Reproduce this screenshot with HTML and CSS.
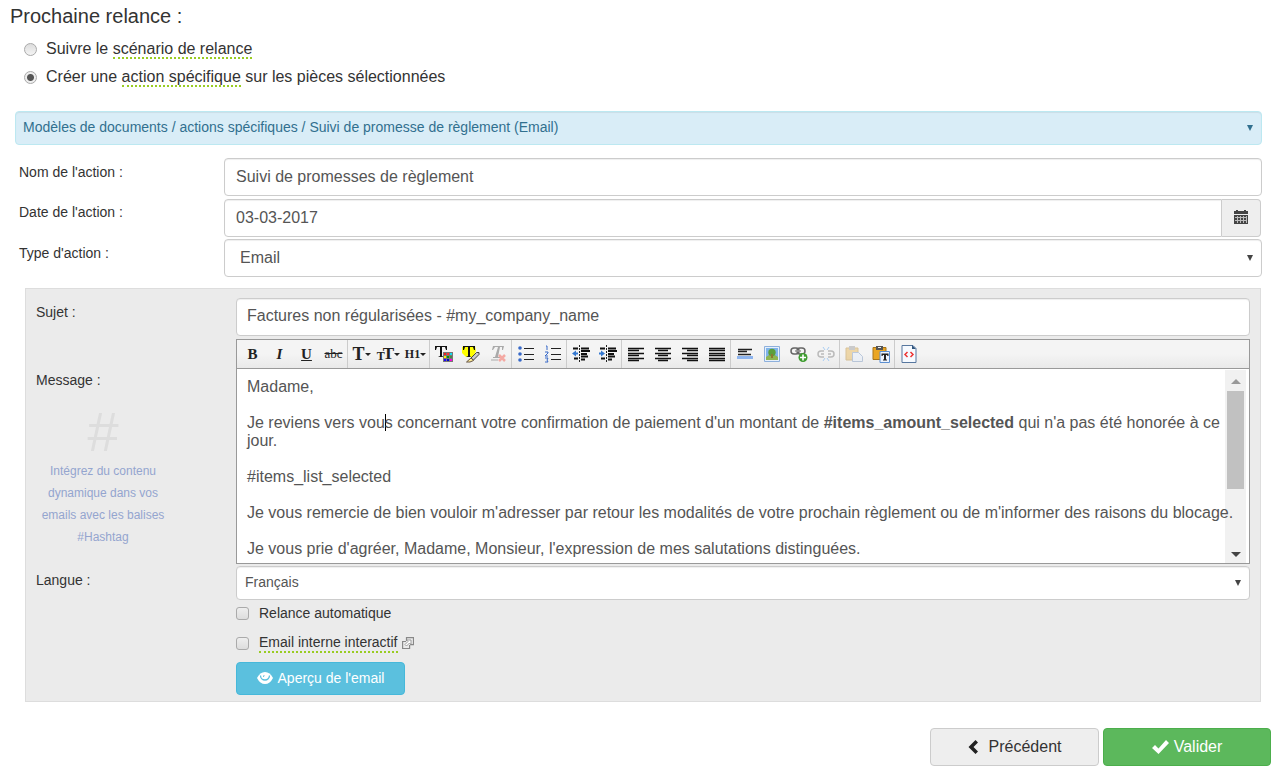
FILE: index.html
```html
<!DOCTYPE html>
<html lang="fr">
<head>
<meta charset="utf-8">
<title>Prochaine relance</title>
<link rel="stylesheet" href="styles.css">
</head>
<body>
<form class="page">
  <h1 class="title">Prochaine relance :</h1>
  <div class="choices">
    <label class="choice"><input class="radio" type="radio" name="mode"><span>Suivre le <span class="hint">scénario de relance</span></span></label>
    <label class="choice"><input class="radio" type="radio" name="mode" checked><span>Créer une <span class="hint">action spécifique</span> sur les pièces sélectionnées</span></label>
  </div>

  <div class="select-wrap template">
    <select class="control compact info" aria-label="Modèle"><option>Modèles de documents / actions spécifiques / Suivi de promesse de règlement (Email)</option></select>
  </div>

  <div class="fields">
    <div class="row">
      <label class="label" for="nom">Nom de l'action :</label>
      <input class="control" id="nom" type="text" value="Suivi de promesses de règlement">
    </div>
    <div class="row">
      <label class="label" for="date">Date de l'action :</label>
      <div class="input-group">
        <input class="control" id="date" type="text" value="03-03-2017">
        <button class="addon" type="button" aria-label="Calendrier">
          <svg width="14" height="14" viewBox="0 0 14 14"><path fill="#444" d="M0 1h2V0h2v1h6V0h2v1h2v3H0zM0 5h14v9H0z"/><path stroke="#eee" stroke-width="1" d="M1 7.500h12M1 10.500h12M3.500 6v7M6.500 6v7M9.500 6v7M12.500 6v7" opacity=".7"/></svg>
        </button>
      </div>
    </div>
    <div class="row">
      <label class="label" for="type">Type d'action :</label>
      <div class="select-wrap"><select class="control" id="type"><option>Email</option></select></div>
    </div>
  </div>

  <section class="panel">
    <div class="row">
      <label class="label" for="sujet">Sujet :</label>
      <input class="control" id="sujet" type="text" value="Factures non régularisées - #my_company_name">
    </div>
    <div class="row message">
      <div class="side">
        <span class="label" id="msg">Message :</span>
        <div class="tip"><span class="hash">#</span><p class="tip-text">Intégrez du contenu dynamique dans vos emails avec les balises #Hashtag</p></div>
      </div>
      <div class="editor">
        <div class="toolbar">
          <div class="group">
            <button class="tool serif" type="button"><b>B</b></button>
            <button class="tool serif" type="button"><i>I</i></button>
            <button class="tool serif" type="button"><u>U</u></button>
            <button class="tool serif strike" type="button"><s>abc</s></button>
          </div>
          <div class="group">
            <button class="tool serif big" type="button">T<span class="drop"></span></button>
            <button class="tool serif big" type="button"><small class="mini">T</small>T<span class="drop"></span></button>
            <button class="tool serif small" type="button">H1<span class="drop"></span></button>
          </div>
          <div class="group">
            <button class="tool" type="button" aria-label="Couleur"><svg class="icon" viewBox="0 0 18 18"><path d="M0 1h12v4h-1L10 2H7v9l2 1H3l2-1V2H2L1 5H0z" fill="#111"/><path d="M8 7h10v10H8z" fill="#777"/><path d="M9 8h2v2H9z" fill="#e22"/><path d="M12 8h2v2h-2z" fill="#f33"/><path d="M15 8h2v2h-2z" fill="#1de"/><path d="M9 11h2v2H9z" fill="#fe0"/><path d="M12 11h2v2h-2z" fill="#090"/><path d="M15 11h2v2h-2z" fill="#484"/><path d="M9 14h2v2H9z" fill="#20f"/><path d="M12 14h2v2h-2z" fill="#00c"/><path d="M15 14h2v2h-2z" fill="#f0d"/></svg></button>
            <button class="tool" type="button" aria-label="Surligner"><svg class="icon" viewBox="0 0 18 18"><path d="M0 2l2-1h11l1 5-3 6H4L0 8z" fill="#ff0"/><path d="M1 1h12v4h-1l-1-3H8v9l1 1H4l2-1V2H3L2 5H1z" fill="#111"/><path d="M14.500 7.500h2.500v2l-5.500 5.500-2.500-2z" fill="#ccc" stroke="#444"/><path d="M9 13l2.500 2.500L8 17H4.500z" fill="#fe9" stroke="#654"/></svg></button>
            <button class="tool" type="button" aria-label="Effacer le format"><svg class="icon" viewBox="0 0 18 18"><path d="M4 1h11l-1 4h-1V2h-2L9 12h2v1H4v-1h2L9 2H6L4 5H3z" fill="#aaa"/><path d="M2 15h7" stroke="#aaa"/><path d="M10 10l6 6m0-6l-6 6" stroke="#f4a9a3" stroke-width="2.500"/></svg></button>
          </div>
          <div class="group">
            <button class="tool" type="button" aria-label="Liste"><svg class="icon" viewBox="0 0 18 18"><g fill="#3668c8"><circle cx="3" cy="3" r="1.800"/><circle cx="3" cy="9" r="1.800"/><circle cx="3" cy="15" r="1.800"/></g><path d="M7 3.500h10M7 9.500h10M7 14.500h10" stroke="#222"/></svg></button>
            <button class="tool" type="button" aria-label="Liste numérotée"><svg class="icon" viewBox="0 0 18 18"><path d="M2 1h1v4M1 7h3v1L1 11h3M1 13h3l-1 2 1 2H1" fill="none" stroke="#3668c8"/><path d="M7 3.500h10M7 9.500h10M7 14.500h10" stroke="#222"/></svg></button>
          </div>
          <div class="group">
            <button class="tool" type="button" aria-label="Diminuer le retrait"><svg class="icon" viewBox="0 0 18 18"><path d="M1 3.500h5M9 3.500h8M9 6h9M9 9h6M9 11.500h7M2 13.500h4M9 14.500h4" stroke="#111" stroke-width="1.800"/><path d="M7.500 0v18" stroke="#222" stroke-dasharray="2 1"/><path d="M0 8.500l4-3v2h2v2H4v2z" fill="#3478d0"/></svg></button>
            <button class="tool" type="button" aria-label="Augmenter le retrait"><svg class="icon" viewBox="0 0 18 18"><path d="M1 3.500h5M9 3.500h8M9 6h9M9 9h6M9 11.500h7M2 13.500h4M9 14.500h4" stroke="#111" stroke-width="1.800"/><path d="M7.500 0v18" stroke="#222" stroke-dasharray="2 1"/><path d="M6 8.500l-4-3v2H0v2h2v2z" fill="#3478d0"/></svg></button>
          </div>
          <div class="group">
            <button class="tool" type="button" aria-label="Gauche"><svg class="icon" viewBox="0 0 18 18"><path d="M1 3.500h16M1 5.500h11M1 8.500h16M1 10.500h11M1 13.500h16M1 15.500h11" stroke="#111" stroke-width="1.300"/></svg></button>
            <button class="tool" type="button" aria-label="Centrer"><svg class="icon" viewBox="0 0 18 18"><path d="M1 3.500h16M4 5.500h10M1 8.500h16M4 10.500h10M1 13.500h16M4 15.500h10" stroke="#111" stroke-width="1.300"/></svg></button>
            <button class="tool" type="button" aria-label="Droite"><svg class="icon" viewBox="0 0 18 18"><path d="M1 3.500h16M6 5.500h11M1 8.500h16M6 10.500h11M1 13.500h16M6 15.500h11" stroke="#111" stroke-width="1.300"/></svg></button>
            <button class="tool" type="button" aria-label="Justifier"><svg class="icon" viewBox="0 0 18 18"><path d="M1 3.500h16M1 5.500h16M1 8.500h16M1 10.500h16M1 13.500h16M1 15.500h16" stroke="#111" stroke-width="1.300"/></svg></button>
          </div>
          <div class="group">
            <button class="tool" type="button" aria-label="Ligne"><svg class="icon" viewBox="0 0 18 18"><path d="M2 4.500h14M2 6.500h9M2 9.500h13" stroke="#222" stroke-width="1.300"/><path d="M1 11h16v3H1z" fill="#8db4ee"/></svg></button>
            <button class="tool" type="button" aria-label="Image"><svg class="icon" viewBox="0 0 18 18"><path d="M1.500 1.500h15v15h-15z" fill="#e6f0fb" stroke="#8eb0dc"/><path d="M3 3h12v12H3z" fill="#80b4ea"/><path d="M3 12l3-2 3 1 3-1 3 2v3H3z" fill="#8fb552"/><circle cx="9" cy="7.500" r="3.700" fill="#5b9f3c"/><path d="M8 9h2v4H8z" fill="#8a7a30"/></svg></button>
            <button class="tool" type="button" aria-label="Lien"><svg class="icon" viewBox="0 0 18 18"><g fill="none" stroke="#666" stroke-width="1.500"><rect x="1" y="3" width="8" height="6" rx="3"/><rect x="7" y="3" width="8" height="6" rx="3"/></g><path d="M5 6h6" stroke="#999" stroke-width="1.500"/><circle cx="13" cy="12.500" r="4.500" fill="#3e9c2f"/><path d="M10 12.500h6M13 9.500v6" stroke="#fff" stroke-width="1.600"/></svg></button>
            <button class="tool" type="button" aria-label="Supprimer le lien"><svg class="icon" viewBox="0 0 18 18"><g fill="none" stroke="#bbb" stroke-width="1.500"><path d="M7 6H4a3 3 0 0 0 0 6h3M11 6h3a3 3 0 0 1 0 6h-3M4 9h3M11 9h3"/></g><path d="M6 2l2 3M12 2l-2 3M6 16l2-3M12 16l-2-3" stroke="#a9cdf2"/></svg></button>
          </div>
          <div class="group">
            <button class="tool" type="button" aria-label="Coller"><svg class="icon faded" viewBox="0 0 18 18"><path d="M1 3h12v12H1z" fill="#e5b34e" stroke="#b98a2e"/><path d="M4 1h6v4H4z" fill="#999"/><path d="M7.500 7.500h6l4 4v5h-10z" fill="#e4edfa" stroke="#7895bd"/></svg></button>
            <button class="tool" type="button" aria-label="Coller le texte"><svg class="icon" viewBox="0 0 18 18"><path d="M1 2.500h13v12H1z" fill="#eaa522" stroke="#a87518"/><path d="M4 1h7v4H4z" fill="#555"/><path d="M6 2h3v1H6z" fill="#eee"/><path d="M8 6.500h9.500v11H8z" fill="#edf4ff" stroke="#5c8fd0"/><path d="M9.500 8.500h7v2.500h-1l-.5-1h-1v4.500h1v1h-4v-1h1V10h-1l-.5 1h-1z" fill="#222"/></svg></button>
          </div>
          <div class="group">
            <button class="tool" type="button" aria-label="Source"><svg class="icon" viewBox="0 0 18 18"><path d="M2 .5h11l3 3v14H2z" fill="#f6faff" stroke="#57779f"/><path d="M12 0l4 4h-4z" fill="#345880"/><path d="M7.500 7L5 9.500 7.500 12M10.500 7l2.500 2.500-2.500 2.500" fill="none" stroke="#e33" stroke-width="1.500"/></svg></button>
          </div>
        </div>
        <div class="edit-area">
          <div class="text" contenteditable="true" role="textbox" aria-labelledby="msg">
            <p>Madame,</p>
            <p>Je reviens vers vou<span class="caret"></span>s concernant votre confirmation de paiement d'un montant de <b>#items_amount_selected</b> qui n'a pas été honorée à ce jour.</p>
            <p>#items_list_selected</p>
            <p class="one-line">Je vous remercie de bien vouloir m'adresser par retour les modalités de votre prochain règlement ou de m'informer des raisons du blocage.</p>
            <p>Je vous prie d'agréer, Madame, Monsieur, l'expression de mes salutations distinguées.</p>
          </div>
          <div class="scroll"><span class="arrow up"></span><span class="thumb"></span><span class="arrow down"></span></div>
        </div>
      </div>
    </div>
    <div class="row">
      <label class="label" for="langue">Langue :</label>
      <div class="stack">
        <div class="select-wrap"><select class="control compact" id="langue"><option>Français</option></select></div>
        <label class="check"><input class="box" type="checkbox"><span>Relance automatique</span></label>
        <label class="check"><input class="box" type="checkbox"><span class="hint">Email interne interactif</span>
          <svg class="ext" width="12" height="12" viewBox="0 0 12 12"><path d="M4 4.500H.6v7h7V8M4.500 4V.6h7v7H8" fill="none" stroke="#888" stroke-width="1.200"/><path d="M3 7.500l3-3-1.500-1.500H9v4.500L7.500 6l-3 3z" fill="#fff" stroke="#888" stroke-width=".8"/></svg></label>
        <button class="btn preview" type="button"><svg width="16" height="12" viewBox="0 0 16 12"><path d="M0 6q3-6 8-6t8 6q-3 6-8 6T0 6z" fill="#fff"/><path d="M3.500 3.500a4.500 4.500 0 0 0 9 0" fill="none" stroke="#5bc0de" stroke-width="1.300"/><path d="M7.500 3q-1 .5-1 2" fill="none" stroke="#5bc0de"/></svg>Aperçu de l'email</button>
      </div>
    </div>
  </section>

  <div class="footer">
    <button class="btn large" type="button"><svg width="11" height="14" viewBox="0 0 11 14"><path d="M10 2.500L7.500 0 .5 7l7 7 2.500-2.500L5.500 7z" fill="#222"/></svg>Précédent</button>
    <button class="btn large primary" type="submit"><svg width="17" height="14" viewBox="0 0 17 14"><path d="M0 8l3-3 3.500 3.500L14 0l3 3L6.500 14z" fill="#fff"/></svg>Valider</button>
  </div>
</form>
</body>
</html>
```
FILE: styles.css
```css
* { box-sizing: border-box; }
body { margin: 0; background: #fff; color: #333; font: 14px/20px "Liberation Sans", Arial, sans-serif; }
button, input, select { font: inherit; color: inherit; margin: 0; }
.page { padding: 4px 9px 8px 10px; }
.title { margin: 0; font-size: 20px; line-height: 24px; font-weight: 400; }
.choices { display: grid; gap: 4px; padding: 9px 0 0 14px; }
.choice { display: flex; align-items: center; gap: 9px; font-size: 16px; line-height: 24px; }
.hint { border-bottom: 2px dotted #9c2; }
.radio { appearance: none; width: 13px; height: 13px; border: 1px solid #aaa; border-radius: 50%; background: linear-gradient(#ddd, #f4f4f4); }
.radio:checked { background: radial-gradient(circle, #555 3px, #eee 4px); }

.control { width: 100%; height: 38px; padding: 0 11px; border: 1px solid #ccc; border-radius: 4px; background: #fff; color: #555; font-size: 16px; appearance: none; box-shadow: inset 0 1px 1px #0001; }
.compact { height: 34px; padding: 0 8px 2px; font-size: 14px; }
.select-wrap { display: grid; align-items: center; color: #444; }
.select-wrap > .control, .select-wrap::after { grid-area: 1 / 1; }
.select-wrap::after { content: ""; justify-self: end; margin-right: 9px; width: 6px; height: 6px; background: currentColor; clip-path: polygon(0 0, 100% 0, 50% 100%); pointer-events: none; z-index: 1; }
.template { margin: 22px 9px 0 5px; color: #31708f; }
.info { padding-left: 7px; background: #d9edf7; border-color: #bce8f1; color: #31708f; }

.fields { display: grid; gap: 2px; margin: 13px 9px 0 9px; }
.row { display: grid; grid-template-columns: 205px minmax(0, 1fr); align-items: start; }
.label { padding-top: 4px; }
#type { padding-left: 15px; }
.input-group { display: flex; padding: 1px 1px 0 0; }
.input-group .control { flex: 1; border-radius: 4px 0 0 4px; }
.addon { display: grid; place-items: center; width: 39px; padding: 0 1px 2px 0; border: 1px solid #ccc; border-left: 0; border-radius: 0 4px 4px 0; background: #eee; }

.panel { display: grid; gap: 2px; margin: 11px 10px 0 15px; padding: 9px 10px 6px 10px; border: 1px solid #ddd; background: #ebebeb; }
.panel .row { grid-template-columns: 200px minmax(0, 1fr); }
.panel #sujet { padding: 0 10px 2px; }
.panel .message { padding-top: 1px; }
.side { padding-top: 27px; }
.side .label { display: block; }
.tip { width: 134px; text-align: center; padding-top: 18px; }
.hash { display: block; color: #ddd; font-size: 56px; line-height: 48px; }
.tip-text { margin: 4px 0 0; color: #94a5cf; font-size: 12px; line-height: 22px; }
.editor { border: 1px solid #999; background: #fff; }
.toolbar { display: flex; height: 29px; padding: 0 2px; border-bottom: 1px solid #999; background: linear-gradient(#f4f4f4 50%, #e9e9e9); }
.group { display: flex; border-right: 1px solid #ccc; }
.group:last-child { border: 0; }
.tool { display: flex; align-items: center; justify-content: center; width: 27px; padding: 0; border: 0; background: none; color: #222; }
.icon { width: 18px; height: 18px; }
.faded { opacity: 0.45; }
.serif { font: 700 15px "Liberation Serif", serif; }
.strike { font-size: 13px; font-weight: 400; }
.small { font-size: 12px; }
.big { font-size: 18px; }
.big:nth-child(2) { font-size: 17px; }
.mini { margin-right: -2px; font-size: 12px; padding-top: 4px; }
.drop { border: 3px solid transparent; border-top-color: #222; border-bottom: 0; }
.edit-area { display: flex; height: 194px; padding-right: 3px; overflow: hidden; }
.text { z-index: 1; flex: 1; min-width: 0; padding: 9px 0 0 10px; color: #555; font-size: 16px; line-height: 18px; outline: 0; }
.text p { margin: 0 0 18px; }
.text .one-line { white-space: nowrap; }
.caret { margin-right: -1px; border-left: 1px solid #000; }
.scroll { display: flex; flex-direction: column; align-items: center; width: 21px; padding: 9px 0 6px; margin-top: 1px; background: #f1f1f1; }
.arrow { border: 5px solid transparent; }
.up { border-top: 0; border-bottom-color: #999; }
.down { border-bottom: 0; border-top-color: #444; margin-top: auto; }
.thumb { width: 17px; height: 98px; margin-top: 7px; background: #c1c1c1; }

.stack { display: grid; }
.check { display: flex; align-items: center; gap: 10px; height: 30px; padding-bottom: 4px; }
.box { appearance: none; width: 13px; height: 13px; border: 1px solid #aaa; border-radius: 3px; background: linear-gradient(#eee, #ddd); }
.check .hint { line-height: 18px; }
.ext { margin-left: -6px; }
.btn { display: flex; align-items: center; justify-content: center; border: 1px solid #ccc; border-radius: 4px; background: #eee; }
.preview { width: 169px; height: 33px; margin-top: 2px; padding-bottom: 3px; gap: 5px; background: #5bc0de; border-color: #46b8da; color: #fff; }
.footer { display: flex; justify-content: flex-end; gap: 4px; margin-top: 26px; }
.large { width: 169px; height: 38px; gap: 10px; font-size: 16px; }
.primary { width: 168px; gap: 5px; background: #5cb85c; border-color: #4cae4c; color: #fff; }
```
